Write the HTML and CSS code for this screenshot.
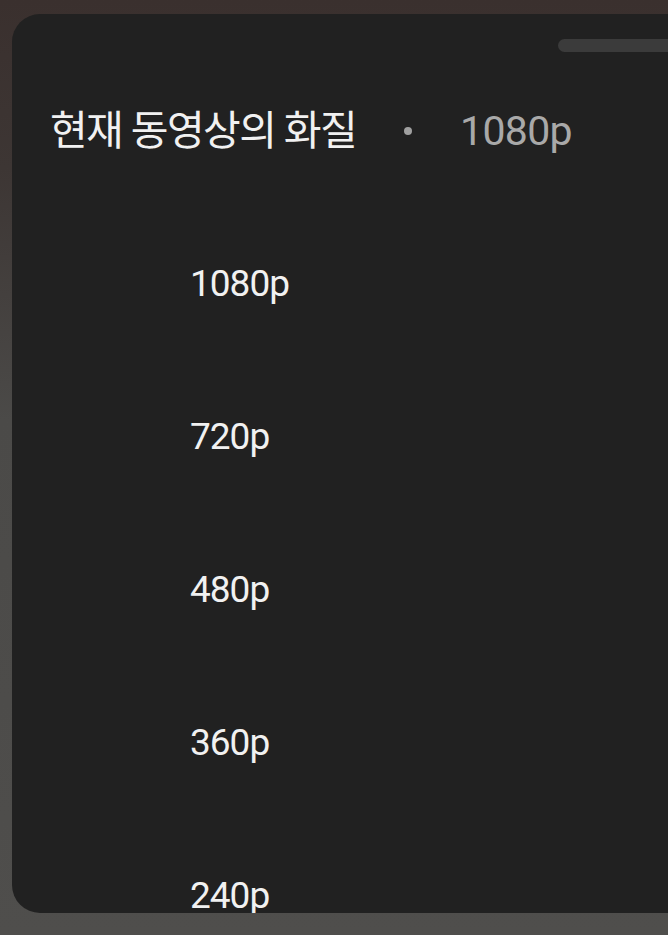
FILE: index.html
```html
<!DOCTYPE html>
<html lang="ko">
<head>
    <meta charset="UTF-8">
    <meta name="viewport" content="width=device-width, initial-scale=1.0">
    <title>화질</title>
    <link rel="stylesheet" href="styles.css">
</head>
<body>
    <div class="sheet">
        <div class="handle"></div>
        <div class="sheet-title">
            <span class="title-text">현재 동영상의 화질</span>
            <span class="dot"></span>
            <span class="current">1080p</span>
        </div>
        <ul class="quality-list">
            <li>1080p</li>
            <li>720p</li>
            <li>480p</li>
            <li>360p</li>
            <li>240p</li>
        </ul>
    </div>
</body>
</html>
```

FILE: styles.css
```css
:root {
    --sheet-bg: #212121;
    --text-color: #f1f1f1;
    --muted-color: #a9a9a9;
}
* {
    box-sizing: border-box;
    margin: 0;
    padding: 0;
}
body {
    width: 668px;
    height: 935px;
    overflow: hidden;
    font-family: Roboto, "Noto Sans CJK KR", sans-serif;
    background: linear-gradient(180deg, #3a302e 0%, #3d3634 18%, #4b4a48 45%, #4d4c4a 75%, #4f4e4c 100%);
    padding-top: 14px;
    padding-left: 12px;
}
.sheet {
    background: var(--sheet-bg);
    height: 899px;
    border-radius: 28px 0 0 28px;
    overflow: hidden;
    padding-top: 25px;
}
.handle {
    margin-left: auto;
    width: 110px;
    height: 13px;
    background: #3b3b3b;
    border-radius: 7px 0 0 7px;
}
.sheet-title {
    display: flex;
    align-items: center;
    margin-top: 49px;
    padding-left: 38px;
    height: 60px;
    font-size: 41px;
    line-height: 60px;
    color: var(--text-color);
}
.title-text {
    letter-spacing: -1.6px;
}
.dot {
    width: 8px;
    height: 8px;
    border-radius: 50%;
    background: #a0a0a0;
    margin-left: 48px;
    margin-right: 48px;
}
.current {
    color: var(--muted-color);
    letter-spacing: -0.7px;
}
.quality-list {
    list-style: none;
    margin-top: 46px;
    padding-left: 178px;
}
.quality-list li {
    font-size: 37px;
    letter-spacing: -1px;
    line-height: 153px;
    height: 153px;
    color: var(--text-color);
}
```
